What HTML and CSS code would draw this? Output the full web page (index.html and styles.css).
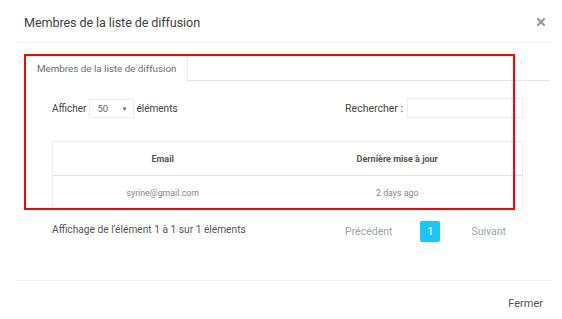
FILE: index.html
```html
<!DOCTYPE html>
<html lang="fr">
<head>
<meta charset="utf-8">
<title>Membres de la liste de diffusion</title>
<link rel="stylesheet" href="styles.css">
</head>
<body>
<div class="modal">
  <div class="modal-header">
    <h4 class="modal-title">Membres de la liste de diffusion</h4>
    <button class="close" aria-label="Fermer">
      <svg width="8" height="8" viewBox="0 0 8 8"><path d="M1 1 L7 7 M7 1 L1 7" stroke="#9a9a9a" stroke-width="2.2" stroke-linecap="square"/></svg>
    </button>
  </div>
  <div class="modal-body">
    <ul class="nav-tabs">
      <li class="tab active">Membres de la liste de diffusion</li>
      <li class="tab-fill"></li>
    </ul>
    <div class="tab-pane">
      <div class="controls">
        <label class="length">Afficher
          <span class="select">50<span class="caret">▼</span></span>
          éléments</label>
        <label class="search">Rechercher : <span class="input"></span></label>
      </div>
      <table class="table">
        <thead>
          <tr><th class="c1">Email</th><th class="c2">Dernière mise à jour</th></tr>
        </thead>
        <tbody>
          <tr><td>syrine@gmail.com</td><td>2 days ago</td></tr>
        </tbody>
      </table>
      <div class="footer-row">
        <div class="info">Affichage de l'élément 1 à 1 sur 1 éléments</div>
        <div class="pagination">
          <span class="page-link prev">Précédent</span>
          <span class="page-num">1</span>
          <span class="page-link next">Suivant</span>
        </div>
      </div>
    </div>
    <div class="highlight"></div>
  </div>
  <div class="modal-footer">
    <button class="btn-close">Fermer</button>
  </div>
</div>
</body>
</html>
```

FILE: styles.css
```css
* { box-sizing: border-box; }
html, body { margin: 0; padding: 0; background: #fff; }
body { font-family: Roboto, "Liberation Sans", sans-serif; color: #555; }

.modal { margin-left: 15px; width: 537px; position: relative; }

.modal-header {
  height: 43px;
  border-bottom: 1px solid #f0f0f0;
  display: flex;
  align-items: center;
  justify-content: space-between;
  padding: 3px 6px 0 9px;
}
.modal-title { margin: 0; font-size: 12.6px; font-weight: 400; color: #3f3f3f; letter-spacing: -0.1px; }
.close { background: none; border: 0; padding: 0; width: 10px; height: 10px; display: flex; align-items: center; justify-content: center; margin-top: -2px; }

.modal-body { padding: 12px 2px 0 10px; position: relative; }

.nav-tabs { list-style: none; margin: 0; padding: 0; display: flex; height: 26px; }
.tab {
  width: 163px; height: 26px;
  border: 1px solid #e8e8e8; border-bottom: 0;
  font-size: 9.8px; color: #6b6b78; white-space: nowrap;
  display: flex; align-items: center; padding-left: 11px;
}
.tab-fill { flex: 1; border-bottom: 1px solid #e6e6e6; }

.tab-pane { padding: 0 27px; }

.controls {
  display: flex; justify-content: space-between; align-items: center;
  height: 20px; margin-top: 17px;
  font-size: 10px; color: #444;
}
.length, .search { display: flex; align-items: center; gap: 3px; }
.select {
  width: 45px; height: 19px; border: 1px solid #eee;
  font-size: 9.5px; color: #666;
  display: flex; align-items: center; justify-content: space-between;
  padding: 0 5px 0 8px; margin-left: -1px;
}
.caret { font-size: 6px; color: #666; }
.search { gap: 4px; font-size: 10.5px; }
.input { width: 116px; height: 20px; border: 1px solid #eee; }

.table {
  width: 100%; border-collapse: collapse; margin-top: 23px;
  border: 1px solid #eee; border-bottom: 0;
  font-size: 9px;
}
.table th {
  height: 34px; font-weight: 700; color: #555;
  border-bottom: 1px solid #e4e4e4; text-align: center;
}
.table th.c1 { width: 220px; }
.table td { height: 34px; color: #888; text-align: center; font-size: 8.8px; }

.footer-row { display: flex; justify-content: space-between; align-items: center; margin-top: 10px; height: 24px; }
.info { font-size: 10.2px; color: #555; padding-bottom: 5px; }
.pagination { display: flex; align-items: center; margin-right: 17px; font-size: 10.5px; color: #9aa3ad; }
.prev { margin-right: 28px; }
.next { margin-left: 31px; }
.page-num {
  width: 20px; height: 21px; background: #1bc5f8; color: #fff; border-radius: 2px;
  display: flex; align-items: center; justify-content: center; font-size: 10.5px;
}

.highlight {
  position: absolute; left: 9px; top: 11px; width: 491px; height: 156px;
  border: 2px solid #f00; pointer-events: none;
}

.modal-footer {
  margin-top: 36px; border-top: 1px solid #f0f0f0; height: 46px;
  display: flex; justify-content: flex-end; align-items: center; padding-right: 9px;
}
.btn-close { background: none; border: 0; font-family: inherit; font-size: 11px; color: #555; padding: 0; }
```
